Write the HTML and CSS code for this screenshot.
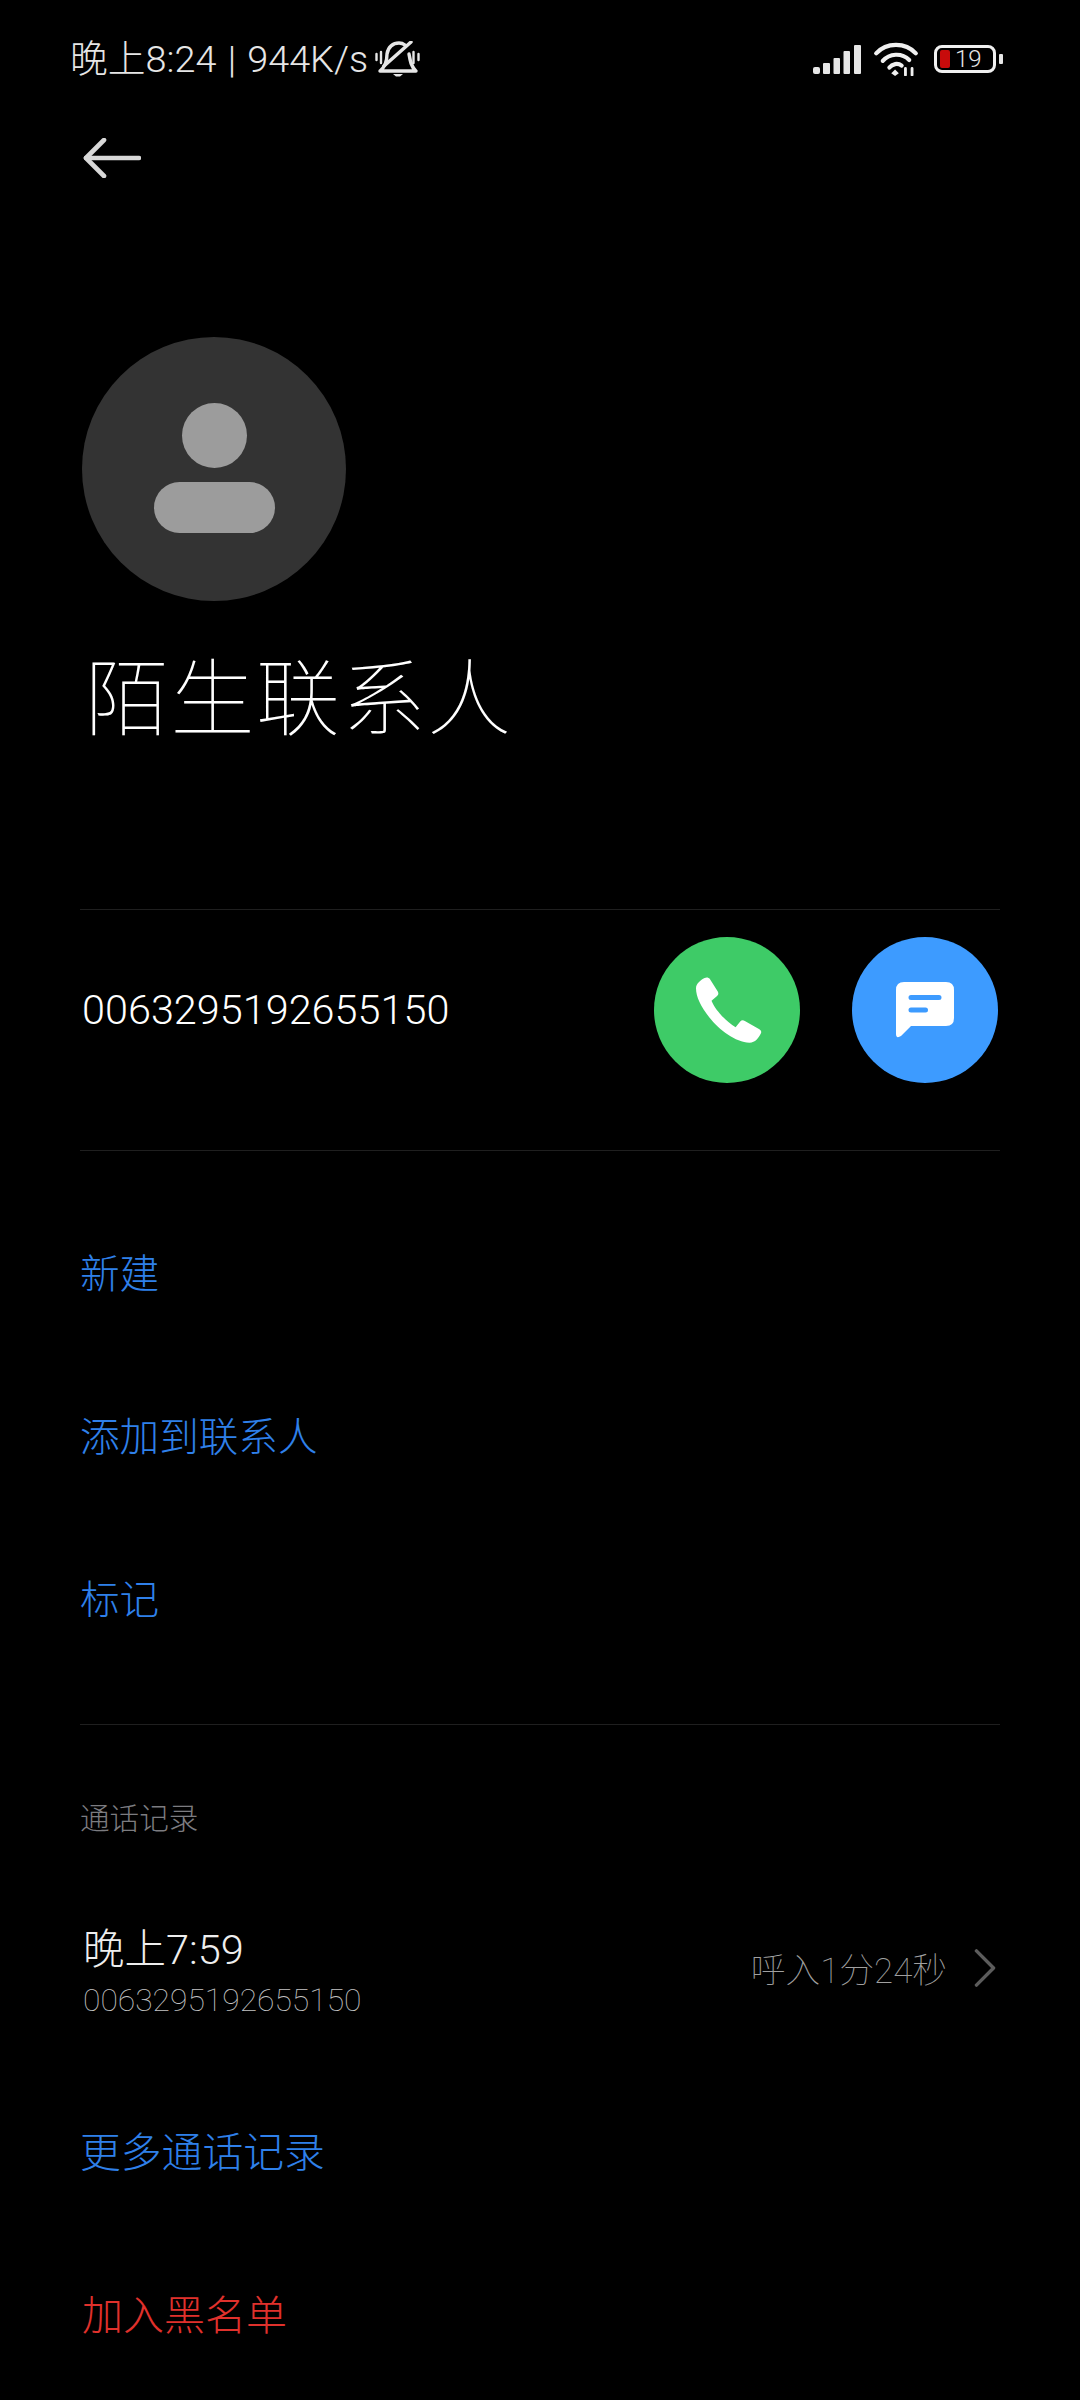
FILE: index.html
```html
<!DOCTYPE html>
<html lang="zh-CN">
<head>
    <meta charset="UTF-8">
    <meta name="viewport" content="width=device-width, initial-scale=1.0">
    <title>陌生联系人</title>
    <link rel="stylesheet" href="styles.css">
</head>
<body>
    <div class="status-bar">
        <div class="status-left">
            <span class="status-text">晚上8:24 | 944K/s</span>
            <svg class="icon-silent" viewBox="8 11 46 37" fill="none" stroke="#e6e6e6" stroke-linecap="round" stroke-linejoin="round">
                <path d="M14 41 H50 C45 37 44 30 43 24 M14 41 C19 37 21 30 21 24 C22 17 27 13 33 13 C35 13 37 13.5 39 15" stroke-width="3.400"/>
                <path d="M18 36 L45 12" stroke-width="3.400"/>
                <path d="M10.5 24 V30 M15 22 V33 M47.5 22 V33 M52.5 24 V30" stroke-width="2.400"/>
                <path d="M27 44 H37 L34 46.500 H30 Z" fill="#e6e6e6" stroke="none"/>
            </svg>
        </div>
        <div class="status-right">
            <svg class="icon-signal" viewBox="0 0 48 29" fill="#e6e6e6">
                <rect x="0" y="22" width="7" height="7" rx="2"/>
                <rect x="10" y="18" width="7" height="11" rx="1"/>
                <rect x="20.500" y="13" width="6.500" height="16" rx="1"/>
                <rect x="30.500" y="6" width="6.500" height="23" rx="1"/>
                <rect x="41" y="0" width="7" height="29" rx="1"/>
            </svg>
            <svg class="icon-wifi" viewBox="0 0 48 36" fill="none" stroke="#f0f0f0" stroke-width="4.400" stroke-linecap="round">
                <path d="M3 12 C14 0 34 0 45 12"/>
                <path d="M10 20 C17 12 30 11 38 19"/>
                <path d="M17 27 C20 23 26 22 30 25"/>
                <path d="M19 33 L23 29 L27 33 L23 36 Z" fill="#f0f0f0" stroke="none"/>
                <path d="M34 28 V35 M41 28 V35" stroke-width="3"/>
            </svg>
            <div class="battery">
                <div class="battery-body">
                    <span class="battery-fill"></span>
                    <span class="battery-num">19</span>
                </div>
                <span class="battery-nub"></span>
            </div>
        </div>
    </div>

    <div class="back-row">
        <svg class="icon-back" viewBox="0 0 58 40" fill="none" stroke="#d8d8d8" stroke-width="4.600" stroke-linecap="round" stroke-linejoin="round">
            <path d="M21 2 L3 20 L21 38"/>
            <path d="M3 20 H56"/>
        </svg>
    </div>

    <div class="avatar">
        <span class="avatar-head"></span>
        <span class="avatar-body"></span>
    </div>
    <h1 class="contact-name">陌生联系人</h1>

    <div class="number-row">
        <span class="number">0063295192655150</span>
        <div class="number-actions">
            <div class="round-btn call">
                <svg class="icon-phone" viewBox="0 0 200 200" fill="#fff">
                    <path d="M26 3 C32 0 38 1 42 6 L66 44 C69 50 68 54 63 58 L47 72 C58 100 92 136 120 152 L134 135 C138 130 143 130 148 133 L192 158 C198 162 199 167 196 172 C190 184 180 199 162 199 C120 198 70 160 40 122 C15 90 0 60 0 34 C0 20 14 9 26 3 Z"/>
                </svg>
            </div>
            <div class="round-btn sms">
                <svg class="icon-sms" viewBox="0 0 58 56" fill="#fff">
                    <path fill-rule="evenodd" d="M8 0 H50 Q58 0 58 8 V36 Q58 44 50 44 H15 L5 54 Q0 57 0 52 V8 Q0 0 8 0 Z M15 13 Q12.5 13 12.5 15.5 Q12.5 18 15 18 H43 Q45.5 18 45.5 15.5 Q45.5 13 43 13 Z M15 25.500 Q12.500 25.500 12.500 28 Q12.500 30.500 15 30.500 H29.500 Q32 30.500 32 28 Q32 25.500 29.500 25.500 Z"/>
                </svg>
            </div>
        </div>
    </div>

    <div class="actions">
        <div class="link">新建</div>
        <div class="link">添加到联系人</div>
        <div class="link">标记</div>
    </div>

    <div class="history">
        <div class="history-title">通话记录</div>
        <div class="history-row">
            <div class="history-main">
                <div class="history-time">晚上7:59</div>
                <div class="history-number">0063295192655150</div>
            </div>
            <span class="history-detail">呼入1分24秒</span>
            <svg class="icon-chevron" viewBox="0 0 24 40" fill="none" stroke="#5c5c5c" stroke-width="3.600" stroke-linecap="round" stroke-linejoin="round">
                <path d="M3 2 L21 20 L3 38"/>
            </svg>
        </div>
    </div>

    <div class="link more">更多通话记录</div>
    <div class="link block">加入黑名单</div>
</body>
</html>
```

FILE: styles.css
```css
* {
    box-sizing: border-box;
}
html, body {
    background-color: #000;
}
body {
    margin: 0;
    width: 1080px;
    height: 2400px;
    overflow: hidden;
    padding: 0 80px;
    color: #fff;
    font-family: Roboto, "Noto Sans CJK SC", sans-serif;
    font-weight: 300;
}

/* status bar */
.status-bar {
    display: flex;
    justify-content: space-between;
    align-items: center;
    height: 116px;
    margin: 0 -3px 0 -10px;
}
.status-left {
    display: flex;
    align-items: center;
    gap: 6px;
}
.status-text {
    padding-bottom: 6px;
    font-size: 37.800px;
    word-spacing: 2px;
    color: #e6e6e6;
}
.icon-silent {
    width: 46px;
    height: 37px;
    margin-top: 3px;
}
.status-right {
    display: flex;
    align-items: center;
    gap: 12px;
    margin-top: 2px;
}
.icon-signal {
    width: 48px;
    height: 29px;
}
.icon-wifi {
    width: 46px;
    height: 34px;
    margin-right: 3px;
}
.battery {
    display: flex;
    align-items: center;
    gap: 3px;
}
.battery-body {
    display: flex;
    align-items: center;
    gap: 5px;
    width: 62px;
    height: 28px;
    border: 3px solid #f0f0f0;
    border-radius: 8px;
    padding-left: 3px;
}
.battery-fill {
    width: 10px;
    height: 18px;
    border-radius: 2px;
    background-color: #c80b0b;
}
.battery-num {
    font-size: 24px;
    line-height: 1;
    color: #e6e6e6;
}
.battery-nub {
    width: 4px;
    height: 10px;
    border-radius: 1px;
    background-color: #e6e6e6;
}

/* back arrow */
.back-row {
    display: flex;
    height: 221px;
    padding-top: 22px;
    padding-left: 3px;
    align-items: flex-start;
}
.icon-back {
    width: 58px;
    height: 40px;
}

/* avatar and name */
.avatar {
    display: flex;
    flex-direction: column;
    align-items: center;
    justify-content: center;
    gap: 14px;
    width: 264px;
    height: 264px;
    margin-left: 2px;
    padding-bottom: 2px;
    border-radius: 50%;
    background-color: #333;
}
.avatar-head {
    width: 65px;
    height: 65px;
    border-radius: 50%;
    background-color: #9c9c9c;
}
.avatar-body {
    width: 121px;
    height: 51px;
    border-radius: 26px;
    background-color: #9c9c9c;
}
.contact-name {
    margin: 45px 0 0 5px;
    font-size: 84px;
    line-height: 110px;
    font-weight: 100;
    letter-spacing: 1.500px;
}

/* number with call and sms buttons */
.number-row {
    display: flex;
    align-items: center;
    justify-content: space-between;
    height: 242px;
    margin-top: 153px;
    border-top: 1px solid #1f1f1f;
    border-bottom: 1px solid #1f1f1f;
    padding: 0 2px 40px 2px;
    font-size: 41.400px;
}
.number-actions {
    display: flex;
    gap: 52px;
}
.round-btn {
    display: flex;
    align-items: center;
    justify-content: center;
    width: 146px;
    height: 146px;
    border-radius: 50%;
}
.call {
    background-color: #3ecb67;
}
.sms {
    background-color: #3d9bff;
}
.icon-phone {
    width: 66px;
    height: 66px;
    margin-left: 4px;
}
.icon-sms {
    width: 58px;
    height: 56px;
}

/* action links */
.link {
    display: flex;
    align-items: center;
    height: 80px;
    font-size: 39.600px;
    color: #2f80ea;
}
.actions {
    display: flex;
    flex-direction: column;
    gap: 83px;
    height: 574px;
    padding-top: 79px;
    border-bottom: 1px solid #1f1f1f;
}

/* call history */
.history-title {
    margin-top: 74px;
    font-size: 29.600px;
    line-height: 40px;
    color: #7c7c80;
}
.history-row {
    display: flex;
    align-items: center;
    margin-top: 83px;
}
.history-main {
    flex: 1;
    padding-left: 3px;
}
.history-time {
    font-size: 41.500px;
    line-height: 56px;
    color: #eee;
}
.history-number {
    font-size: 31.800px;
    line-height: 44px;
    font-weight: 100;
    color: #c4c4c4;
}
.history-detail {
    margin-bottom: 9px;
    font-size: 34.800px;
    font-weight: 100;
    color: #a0a0a0;
}
.icon-chevron {
    width: 24px;
    height: 38px;
    margin: 0 3px 9px 26px;
}
.more {
    margin-top: 87px;
    font-size: 40.800px;
}
.block {
    margin-top: 82.500px;
    padding-left: 2px;
    font-size: 41px;
    color: #e0312c;
}
```
